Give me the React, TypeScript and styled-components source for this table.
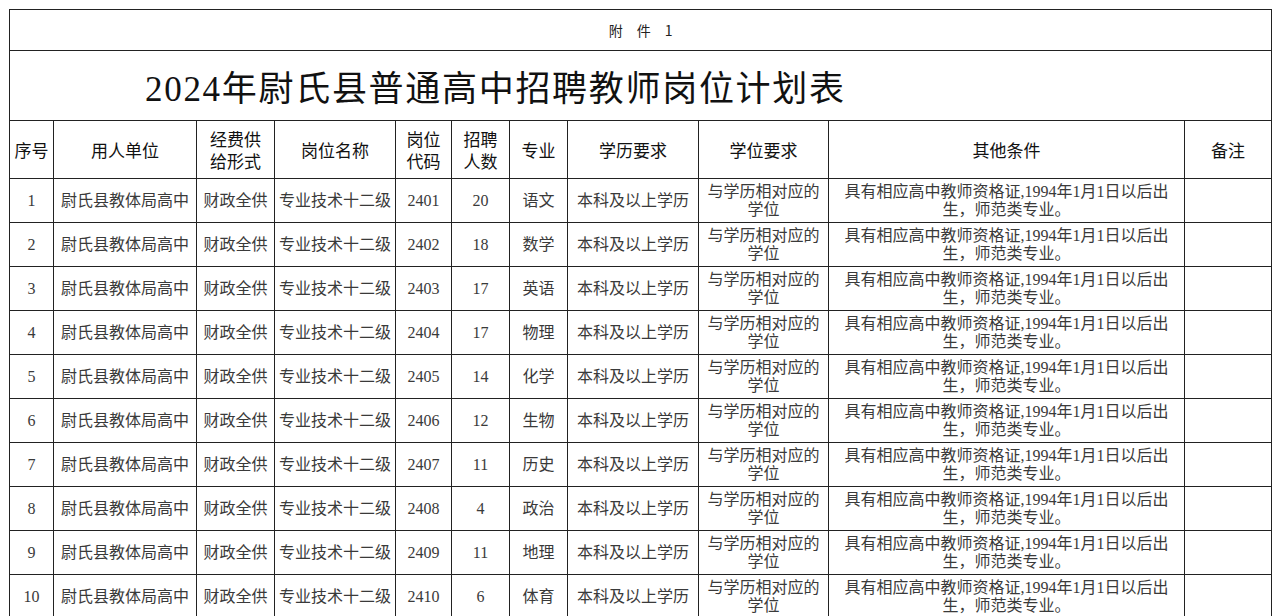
import * as React from 'react'
import styled, { createGlobalStyle } from 'styled-components'

const GlobalStyle = createGlobalStyle`
    html, body {
        margin: 0;
        padding: 0;
        background: #fff;
        overflow: hidden;
    }
`

const Page = styled.div`
    padding: 9px 0 0 9px;
    width: 1280px;
    box-sizing: border-box;
`

const Sheet = styled.table`
    border-collapse: collapse;
    table-layout: fixed;
    width: 1262px;
    color: #3a3a3a;
`

const Cell = styled.td<{ $head?: boolean }>`
    border: 1px solid #222;
    padding: 0;
    text-align: center;
    vertical-align: middle;
    font-family: ${(p) => (p.$head ? '"Noto Sans CJK SC", sans-serif' : '"Liberation Serif", "Noto Sans CJK SC", serif')};
    font-size: ${(p) => (p.$head ? '17px' : '16px')};
    line-height: ${(p) => (p.$head ? '22px' : '18px')};
    color: ${(p) => (p.$head ? '#111' : '#3a3a3a')};
    overflow: hidden;
    white-space: nowrap;
`

const AnnexRow = styled.tr`
    height: 41px;
`

const AnnexCell = styled.td`
    border: 1px solid #222;
    text-align: center;
    font-family: "Noto Sans CJK SC", sans-serif;
    font-size: 14px;
    color: #222;
    letter-spacing: 14px;
    padding: 0 0 0 14px;
`

const TitleRow = styled.tr`
    height: 70px;
`

const TitleCell = styled.td`
    border: 1px solid #222;
    padding: 0 0 0 135px;
    text-align: left;
    font-family: "Liberation Serif", "Noto Sans CJK SC", serif;
    font-size: 35px;
    letter-spacing: 1.7px;
    color: #111;
    white-space: nowrap;
`

const HeadRow = styled.tr`
    height: 58px;
`

const DataRow = styled.tr`
    height: 44px;
`

const widths = [44, 143, 78, 121, 56, 58, 58, 131, 130, 356, 87]

const headers = [
    '序号',
    '用人单位',
    '经费供\n给形式',
    '岗位名称',
    '岗位\n代码',
    '招聘\n人数',
    '专业',
    '学历要求',
    '学位要求',
    '其他条件',
    '备注',
]

const posts = [
    { count: 20, major: '语文' },
    { count: 18, major: '数学' },
    { count: 17, major: '英语' },
    { count: 17, major: '物理' },
    { count: 14, major: '化学' },
    { count: 12, major: '生物' },
    { count: 11, major: '历史' },
    { count: 4, major: '政治' },
    { count: 11, major: '地理' },
    { count: 6, major: '体育' },
]

const lines = (text: string) =>
    text.split('\n').map((line, i) => (
        <React.Fragment key={i}>
            {i > 0 && <br />}
            {line}
        </React.Fragment>
    ))

const App = () => {
    return (
        <Page>
            <GlobalStyle />
            <Sheet>
                <colgroup>
                    {widths.map((w, i) => (
                        <col key={i} style={{ width: w }} />
                    ))}
                </colgroup>
                <tbody>
                    <AnnexRow>
                        <AnnexCell colSpan={11}>附件1</AnnexCell>
                    </AnnexRow>
                    <TitleRow>
                        <TitleCell colSpan={11}>2024年尉氏县普通高中招聘教师岗位计划表</TitleCell>
                    </TitleRow>
                    <HeadRow>
                        {headers.map((h) => (
                            <Cell $head key={h}>{lines(h)}</Cell>
                        ))}
                    </HeadRow>
                    {posts.map(({ count, major }, i) => (
                        <DataRow key={i}>
                            <Cell>{i + 1}</Cell>
                            <Cell>尉氏县教体局高中</Cell>
                            <Cell>财政全供</Cell>
                            <Cell>专业技术十二级</Cell>
                            <Cell>{2401 + i}</Cell>
                            <Cell>{count}</Cell>
                            <Cell>{major}</Cell>
                            <Cell>本科及以上学历</Cell>
                            <Cell>{lines('与学历相对应的\n学位')}</Cell>
                            <Cell>{lines('具有相应高中教师资格证,1994年1月1日以后出\n生，师范类专业。')}</Cell>
                            <Cell></Cell>
                        </DataRow>
                    ))}
                </tbody>
            </Sheet>
        </Page>
    )
}

export default App
